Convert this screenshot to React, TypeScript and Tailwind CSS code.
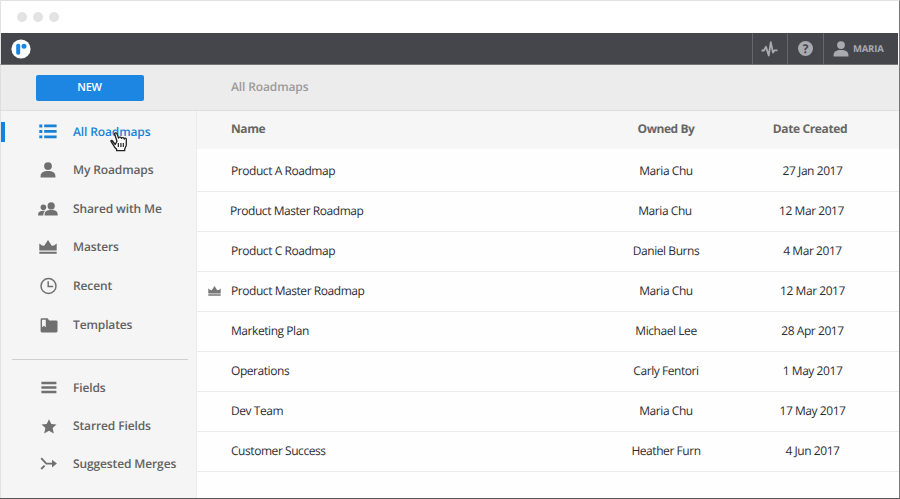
import React from "react";

type IconProps = { className?: string };

const CrownIcon = ({ className }: IconProps) => (
  <svg viewBox="0 0 18 14" className={className} fill="currentColor">
    <path d="M0.3 10.400V3.600L3 5.600 5.200 5.800 9 0 12.800 5.800 15 5.600 17.700 3.600V10.400Z M0.3 11.700h17.400V13.800h-17.400Z" />
  </svg>
);

const PersonIcon = ({ className }: IconProps) => (
  <svg viewBox="0 0 16 16" className={className} fill="currentColor">
    <circle cx="8" cy="4.1" r="3.9" />
    <path d="M0.6 15.5v-1.3C0.6 10.6 3.4 9 8 9s7.4 1.6 7.4 5.2v1.3Z" />
  </svg>
);

const ListIcon = () => (
  <svg width="18" height="15" viewBox="0 0 18 15" fill="currentColor">
    <path d="M0.3 0.6h3v2.8h-3ZM0.3 6.1h3v2.8h-3ZM0.3 11.5h3v2.8h-3ZM5.2 0.6H17.6v2.7H5.2ZM5.2 6.1H17.6v2.7H5.2ZM5.2 11.5H17.6v2.7H5.2Z" />
  </svg>
);

const PeopleIcon = () => (
  <svg width="20" height="14" viewBox="0 0 20 14" fill="currentColor">
    <circle cx="13.2" cy="3.9" r="3.6" />
    <path d="M6.6 13.5v-1C6.6 9.5 9 8.1 13.2 8.1s6.5 1.4 6.5 4.4v1Z" />
    <circle cx="5.4" cy="5.2" r="2.8" />
    <path d="M0.1 13.5v-1.2C0.1 10 2 8.700 5.200 8.700c.8 0 1.400 0 2 .2C5.900 9.800 5.300 11 5.300 13.500Z" />
  </svg>
);

const ClockIcon = () => (
  <svg width="18" height="18" viewBox="0 0 18 18" fill="none" stroke="currentColor" strokeWidth="1.500">
    <circle cx="9.500" cy="9" r="7.500" />
    <path d="M9.200 4.300v5.200h5" />
  </svg>
);

const FolderIcon = () => (
  <svg width="18" height="15" viewBox="0 0 18 15" fill="currentColor" className="translate-x-px">
    <path
      fillRule="evenodd"
      d="M1.700 0.300H7.600L9.200 2.400H16.200A1.300 1.300 0 0 1 17.500 3.700V13.100A1.300 1.300 0 0 1 16.200 14.400H1.900A1.300 1.300 0 0 1 .6 13.100V1.400A1.100 1.100 0 0 1 1.700 .3ZM2 1.700V9.300L3.900 7.700 5.800 9.300V1.700Z"
    />
  </svg>
);

const BarsIcon = () => (
  <svg width="16" height="13" viewBox="0 0 16 13" fill="currentColor" className="translate-x-px">
    <path d="M.4 .8H15.400V3.200H.4ZM.4 5.300H15.400V7.700H.4ZM.4 9.800H15.400V12.200H.4Z" />
  </svg>
);

const StarIcon = () => (
  <svg width="16" height="15" viewBox="0 0 16 15" fill="currentColor" className="translate-x-px">
    <path d="M8 .2 10.300 5 15.500 5.500 11.600 9.100 12.800 14.500 8 11.700 3.200 14.500 4.400 9.100 .5 5.500 5.700 5Z" />
  </svg>
);

const MergeIcon = () => (
  <svg width="18" height="14" viewBox="0 0 18 14" fill="none" stroke="currentColor" strokeWidth="1.900" className="translate-x-px">
    <path d="M1.200 1.200 6.300 6.600H13M1.200 12 4.600 8.600" />
    <path d="M12 2.800 16.900 6.600 12 10.400Z" fill="currentColor" stroke="none" />
  </svg>
);

const HandCursor = () => (
  <svg width="18" height="20" viewBox="0 0 18 20" className="absolute left-[37px] top-[9px]">
    <path
      d="M5.200 12.800 2.500 9.300C1.400 7.900 .5 9 1.300 10.200L4.700 15.500 6.600 17.600V19H14.700V17.400L16.300 13.500V7.400C16.300 6.200 14.500 6 14.200 7.300 14.200 5.700 12 5.300 11.500 6.700 11.300 5.200 9 5 8.500 6.400L6.900 1.900C6.300 .5 4.300 1.100 4.700 2.600L7 9.500Z"
      transform="translate(0 -.3)"
      fill="#fff"
      stroke="#222"
      strokeWidth="1.300"
      strokeLinejoin="round"
    />
    <path d="M8.300 11v4M10.900 11v4M13.300 11v4" stroke="#222" strokeWidth="1.200" />
  </svg>
);

type NavItem = { label: string; icon: React.ReactNode; row: string; active?: boolean };

const mainNav: NavItem[] = [
  { label: "All Roadmaps", icon: <ListIcon />, row: "h-[39px]", active: true },
  { label: "My Roadmaps", icon: <PersonIcon className="h-4 w-4" />, row: "h-[38px]" },
  { label: "Shared with Me", icon: <PeopleIcon />, row: "h-[39px]" },
  { label: "Masters", icon: <CrownIcon className="h-[14px] w-[18px]" />, row: "h-[38px]" },
  { label: "Recent", icon: <ClockIcon />, row: "h-[39px]" },
  { label: "Templates", icon: <FolderIcon />, row: "h-[40px]" },
];

const fieldNav: NavItem[] = [
  { label: "Fields", icon: <BarsIcon />, row: "h-[39px]" },
  { label: "Starred Fields", icon: <StarIcon />, row: "h-[38px]" },
  { label: "Suggested Merges", icon: <MergeIcon />, row: "h-[38px]" },
];

const rows = [
  { name: "Product A Roadmap", owner: "Maria Chu", date: "27 Jan 2017", row: "h-[43px] pt-px" },
  { name: "Product Master Roadmap", owner: "Maria Chu", date: "12 Mar 2017", row: "h-10 -ml-px pb-px" },
  { name: "Product C Roadmap", owner: "Daniel Burns", date: "4 Mar 2017", row: "h-10 pb-[2px]" },
  { name: "Product Master Roadmap", owner: "Maria Chu", date: "12 Mar 2017", row: "h-10 pb-[2px]", master: true },
  { name: "Marketing Plan", owner: "Michael Lee", date: "28 Apr 2017", row: "h-10 pb-[2px]" },
  { name: "Operations", owner: "Carly Fentori", date: "1 May 2017", row: "h-10 pb-[2px]" },
  { name: "Dev Team", owner: "Maria Chu", date: "17 May 2017", row: "h-10 pb-[2px]" },
  { name: "Customer Success", owner: "Heather Furn", date: "4 Jun 2017", row: "h-10 pb-[2px]" },
];

function NavRow({ label, icon, row, active }: NavItem) {
  return (
    <a className={`flex items-center ${row} ${active ? "text-[#1683d8]" : "text-[#707070]"}`}>
      <span className={`h-5 w-1 ${active ? "bg-[#1683d8]" : ""}`} />
      <span className="ml-[31px] flex w-[23px] justify-center">{icon}</span>
      <span className={`relative ml-[14px] whitespace-nowrap text-[12px] font-semibold tracking-[-0.12px] ${active ? "" : "text-[#626262]"}`}>
        {label}
        {active && <HandCursor />}
      </span>
    </a>
  );
}

export default function App() {
  return (
    <div className="flex h-[499px] w-[900px] flex-col overflow-hidden border-b border-r border-t border-b-[#555] border-r-[#777] border-t-[#e2e2e2] bg-white font-['Open_Sans','Noto_Sans',sans-serif] [text-rendering:geometricPrecision]">
      <div className="flex h-8 shrink-0 items-center gap-[6px] border-l border-[#e2e2e2] pl-4">
        <span className="h-[10px] w-[10px] rounded-full bg-[#e3e3e3]" />
        <span className="h-[10px] w-[10px] rounded-full bg-[#e3e3e3]" />
        <span className="h-[10px] w-[10px] rounded-full bg-[#e3e3e3]" />
      </div>

      <header className="mr-px flex h-8 shrink-0 items-stretch border-b border-l border-b-[#74767a] border-l-[#e2e2e2] bg-[#44464b] text-[#a9aab0]">
        <div className="flex flex-1 items-center pl-[10px]">
          <svg width="20" height="20" viewBox="0 0 20 20">
            <circle cx="10" cy="10" r="9.600" fill="#fff" />
            <rect x="5.200" y="4.800" width="4" height="11" rx="1.700" fill="#1b85e2" />
            <circle cx="13" cy="7.300" r="2.500" fill="#1b85e2" />
          </svg>
        </div>
        <div className="flex w-[35px] items-center justify-center border-l border-[#65676c] pr-px">
          <svg width="17" height="16" viewBox="0 0 17 16" fill="none" stroke="currentColor" strokeWidth="1.800" strokeLinejoin="round">
            <path d="M.5 9.500H3L5 5.800 7.700 14.500 9.800 1.200 12 11.500 13.500 9.300H16.500" />
          </svg>
        </div>
        <div className="flex w-9 items-center justify-center border-l border-[#65676c]">
          <span className="flex h-[15px] w-[15px] items-center justify-center rounded-full bg-[#a9aab0] text-[12px] font-bold leading-none text-[#44464b]">?</span>
        </div>
        <div className="flex w-[75px] items-center border-l border-[#65676c] pl-[9px]">
          <PersonIcon className="h-4 w-4" />
          <span className="ml-1 mt-[2px] text-[9.500px] font-bold tracking-[-0.200px]">MARIA</span>
        </div>
      </header>

      <div className="flex h-[46px] shrink-0 items-center border-b border-l border-b-[#dedede] border-l-[#dedede] bg-[#ececec]">
        <button className="ml-[35px] h-[26px] w-[108px] rounded-[2px] bg-[#1c86e2] pr-px text-[11px] font-semibold tracking-[-0.300px] text-white">NEW</button>
        <span className="ml-[87px] pb-[2px] text-[12px] font-semibold tracking-[-0.120px] text-[#9a9a9a]">All Roadmaps</span>
      </div>

      <div className="flex min-h-0 flex-1">
        <nav className="w-[197px] shrink-0 border-l border-r border-l-[#e2e2e2] border-r-[#ebebeb] bg-[#f5f5f5] pt-[1px]">
          {mainNav.map((item) => (
            <NavRow key={item.label} {...item} />
          ))}
          <div className="ml-[11px] mt-[14px] h-px w-[176px] bg-[#cfcfcf]" />
          <div className="pt-[8px]">
            {fieldNav.map((item) => (
              <NavRow key={item.label} {...item} />
            ))}
          </div>
        </nav>

        <main className="flex-1 bg-[#fefefe] text-[12px] tracking-[-0.440px] text-[#2c2d33]">
          <div className="flex h-[38px] items-center bg-[#f6f6f6] pb-[2px] font-bold text-[#666]">
            <span className="w-[399px] pl-[34px] tracking-[-0.400px]">Name</span>
            <span className="w-[140px] text-center">Owned By</span>
            <span className="w-[148px] text-center tracking-[-0.380px]">Date Created</span>
          </div>
          {rows.map((r, i) => (
            <div key={i} className={`flex items-center border-b border-[#ebebeb] ${r.row}`}>
              <span className="flex w-[34px] justify-center text-[#777]">
                {r.master && <CrownIcon className="h-[10px] w-[13px]" />}
              </span>
              <span className="w-[365px]">{r.name}</span>
              <span className="w-[140px] text-center">{r.owner}</span>
              <span className="w-[153px] text-center">{r.date}</span>
            </div>
          ))}
        </main>
      </div>
    </div>
  );
}
